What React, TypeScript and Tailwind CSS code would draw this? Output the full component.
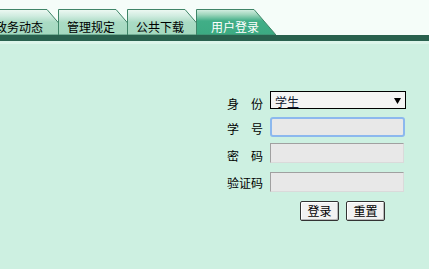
import React from 'react';

const font = { fontFamily: '"SimSun", "Noto Sans CJK SC", sans-serif' };

interface TabProps {
  label: string;
  active?: boolean;
  first?: boolean;
}

// one slanted tab; shape is drawn as svg, label sits on top
const Tab: React.FC<TabProps> = ({ label, active, first }) => {
  const id = active ? 'tab-active' : 'tab-normal';
  return (
    <div className="relative w-[80px] h-[26px] shrink-0 ml-[-11px]">
      <svg className="absolute inset-0" width="80" height="26" viewBox="0 0 80 26">
        <defs>
          <linearGradient id={id} x1="0" y1="0" x2="0" y2="1">
            {active ? (
              <>
                <stop offset="0" stopColor="#d6efe3" />
                <stop offset="0.2" stopColor="#9fd6bd" />
                <stop offset="0.45" stopColor="#41ae87" />
                <stop offset="1" stopColor="#3caa82" />
              </>
            ) : (
              <>
                <stop offset="0" stopColor="#eef9f3" />
                <stop offset="0.25" stopColor="#d0ece0" />
                <stop offset="0.5" stopColor="#aadbc4" />
                <stop offset="1" stopColor="#a4d8bf" />
              </>
            )}
          </linearGradient>
        </defs>
        <polygon points="0.5,26 0.5,0.5 58,0.5 80,26" fill={`url(#${id})`} stroke="#3f8568" strokeWidth="1" />
      </svg>
      <span
        className={`absolute top-[12px] text-[12px] leading-[12px] whitespace-nowrap ${
          active ? 'text-white left-[15px]' : first ? 'text-black left-[6px]' : 'text-black left-[9px]'
        }`}
        style={font}
      >
        {label}
      </span>
    </div>
  );
};

const Label: React.FC<{ chars: string[]; className?: string }> = ({ chars, className }) => (
  <div className={`w-[36px] flex justify-between text-[12px] leading-[12px] text-black ${className ?? ''}`} style={font}>
    {chars.map((c, i) => (
      <span key={i}>{c}</span>
    ))}
  </div>
);

export default function App() {
  return (
    <div className="w-[429px] h-[269px] overflow-hidden bg-[#cdf0e1]" style={font}>
      {/* tab strip */}
      <div className="bg-[#f5fdf9] pt-[9px] flex">
        <Tab label="政务动态" first />
        <Tab label="管理规定" />
        <Tab label="公共下载" />
        <Tab label="用户登录" active />
      </div>
      <div className="h-[6px] bg-[#29614e]" />
      <div className="h-[3px] bg-[#dcf5ea]" />

      {/* login form */}
      <div className="flex justify-end pr-[23px] pt-[47px]">
        <div className="flex flex-col">
          <div className="flex items-start h-[18px]">
            <Label chars={['身', '份']} className="mt-[7px]" />
            <div className="ml-[7px] w-[136px] h-[18px] border border-black bg-[#f4f4f4] flex items-center justify-between pl-[4px] pr-[4px]">
              <span className="text-[12px] leading-[12px] text-[#101830] mt-[3px]">学生</span>
              <svg width="7" height="6" viewBox="0 0 7 6" className="mt-[1px]">
                <polygon points="0,0 7,0 3.5,6" fill="#000" />
              </svg>
            </div>
          </div>

          <div className="flex items-start h-[20px] mt-[8px]">
            <Label chars={['学', '号']} className="mt-[6px]" />
            <div className="ml-[7px] w-[135px] h-[20px] rounded-[3px] border-2 border-[#8cb8ee] bg-[#e8e8e8]" />
          </div>

          <div className="flex items-start h-[20px] mt-[6px]">
            <Label chars={['密', '码']} className="mt-[7px]" />
            <div className="ml-[7px] w-[134px] h-[20px] border border-t-[#a0a0a0] border-l-[#a0a0a0] border-b-[#dadada] border-r-[#dadada] bg-[#e8e8e8]" />
          </div>

          <div className="flex items-start h-[20px] mt-[9px]">
            <Label chars={['验', '证', '码']} className="mt-[5px]" />
            <div className="ml-[7px] w-[134px] h-[20px] border border-t-[#a0a0a0] border-l-[#a0a0a0] border-b-[#dadada] border-r-[#dadada] bg-[#e8e8e8]" />
          </div>

          <div className="flex gap-[7px] mt-[9px] pl-[73px]">
            <button className="w-[39px] h-[20px] rounded-[2px] border border-[#333] bg-[#f2f2f2] shadow-[inset_1px_1px_0_#fff,inset_-1px_-1px_0_#b8b8b8] text-[12px] leading-[12px] text-black">
              登录
            </button>
            <button className="w-[39px] h-[20px] rounded-[2px] border border-[#333] bg-[#f2f2f2] shadow-[inset_1px_1px_0_#fff,inset_-1px_-1px_0_#b8b8b8] text-[12px] leading-[12px] text-black">
              重置
            </button>
          </div>
        </div>
      </div>
    </div>
  );
}
